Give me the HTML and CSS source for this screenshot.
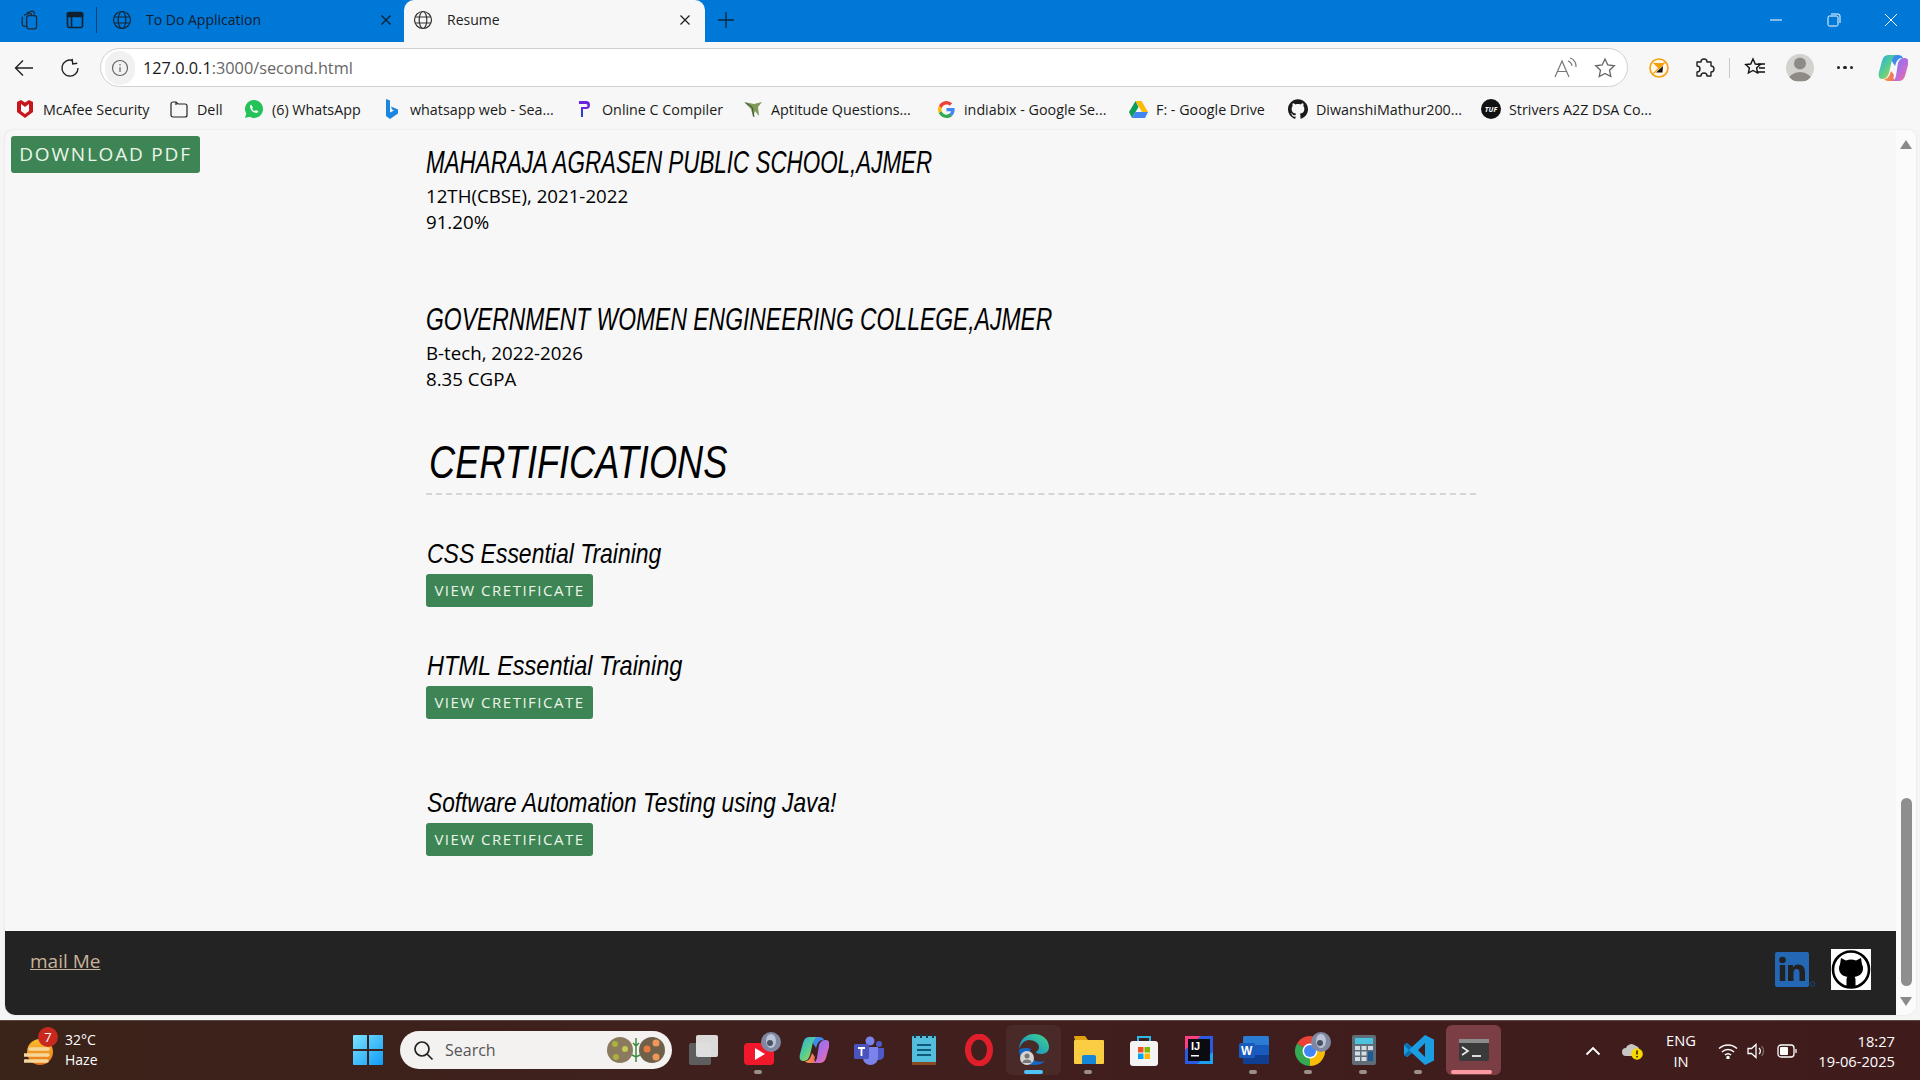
FILE: index.html
```html
<!DOCTYPE html>
<html lang="en">
<head>
<meta charset="utf-8">
<title>Resume</title>
<link rel="stylesheet" href="styles.css">
</head>
<body>
<div class="screen">
  <header class="tabstrip">
    <svg class="ic tool-a" width="22" height="22" viewBox="0 0 20 20" fill="none" stroke="#1d2b3a" stroke-width="1.200"><path d="M7 3.500l5-1.500a1.500 1.500 0 0 1 1.800 1V5"/><path d="M4.500 5.500l5-1.500a1.500 1.500 0 0 1 1.800 1V6"/><rect x="7" y="6" width="9" height="12" rx="2"/><path d="M7 16l-2.500-.5A1.500 1.500 0 0 1 3 14V7"/></svg>
    <svg class="ic tool-b" width="20" height="20" viewBox="0 0 20 20" fill="none" stroke="#10202f" stroke-width="1.600"><rect x="2.500" y="2.500" width="15" height="15" rx="2"/><path d="M2.500 3.500h15v3h-15z" fill="#10202f"/><path d="M6.500 6.500v11"/></svg>
    <span class="tab-sep"></span>
    <div class="tab">
      <svg class="ic" width="20" height="20" viewBox="0 0 20 20" fill="none" stroke="#10263a" stroke-width="1.200"><circle cx="10" cy="10" r="8.500"/><ellipse cx="10" cy="10" rx="3.800" ry="8.500"/><path d="M2 7h16M2 13h16"/></svg>
      <span class="tab-title">To Do Application</span>
      <svg class="tab-close" width="12" height="12" viewBox="0 0 12 12" stroke="#10202f" stroke-width="1.300"><path d="M1.500 1.500l9 9M10.500 1.500l-9 9"/></svg>
    </div>
    <div class="tab tab-active">
      <svg class="ic" width="20" height="20" viewBox="0 0 20 20" fill="none" stroke="#333" stroke-width="1.200"><circle cx="10" cy="10" r="8.500"/><ellipse cx="10" cy="10" rx="3.800" ry="8.500"/><path d="M2 7h16M2 13h16"/></svg>
      <span class="tab-title">Resume</span>
      <svg class="tab-close" width="12" height="12" viewBox="0 0 12 12" stroke="#222" stroke-width="1.300"><path d="M1.500 1.500l9 9M10.500 1.500l-9 9"/></svg>
    </div>
    <svg class="ic tab-new" width="18" height="18" viewBox="0 0 18 18" stroke="#10263a" stroke-width="1.300"><path d="M9 1v16M1 9h16"/></svg>
    <div class="win-controls">
      <svg width="14" height="14" viewBox="0 0 14 14" stroke="#fff" stroke-width="1"><path d="M1 7h12"/></svg>
      <svg width="14" height="14" viewBox="0 0 14 14" fill="none" stroke="#fff" stroke-width="1"><rect x="1" y="3" width="10" height="10" rx="1.500"/><path d="M4 1h7a2 2 0 0 1 2 2v7"/></svg>
      <svg width="14" height="14" viewBox="0 0 14 14" stroke="#fff" stroke-width="1"><path d="M1 1l12 12M13 1L1 13"/></svg>
    </div>
  </header>

  <div class="toolbar">
    <svg class="t-back" width="20" height="20" viewBox="0 0 20 20" fill="none" stroke="#222" stroke-width="1.400"><path d="M19 10H1.500M9 2.500L1.500 10 9 17.500"/></svg>
    <svg class="t-reload" width="20" height="20" viewBox="0 0 20 20" fill="none" stroke="#222" stroke-width="1.400"><path d="M12.500 2.500A8 8 0 1 0 18 10"/><path d="M12.500 1v5H17" transform="rotate(-8 12 4)"/></svg>
    <div class="addressbar">
      <span class="site-info"><svg width="18" height="18" viewBox="0 0 18 18" fill="none" stroke="#666" stroke-width="1.200"><circle cx="9" cy="9" r="7.500"/><path d="M9 8v5M9 5v1.500"/></svg></span>
      <span class="url"><span class="url-host">127.0.0.1</span>:3000/second.html</span>
      <svg class="read-aloud" width="24" height="22" viewBox="0 0 24 22" fill="none" stroke="#777" stroke-width="1.200"><path d="M1 20L8 4l7 16M3.500 14.500h9"/><path d="M14 4a6 6 0 0 1 4 5M16 1a9 9 0 0 1 6 9"/></svg>
      <svg class="addr-star" width="22" height="22" viewBox="0 0 22 22" fill="none" stroke="#666" stroke-width="1.300"><path d="M11 2l2.800 6 6.500.8-4.800 4.400 1.300 6.400L11 16.400l-5.800 3.200 1.300-6.400L1.700 8.800 8.200 8z"/></svg>
    </div>
    <svg class="t-mcafee" width="20" height="20" viewBox="0 0 20 20"><circle cx="10" cy="10" r="9" fill="#fff7ea" stroke="#f59e0b" stroke-width="1.600"/><path d="M4 5h12l-6 6z" fill="#f59e0b"/><path d="M15.500 4.500L4.500 15.500" stroke="#f59e0b" stroke-width="1.300"/><path d="M14 8l-.6 6.500H7z" fill="#111"/></svg>
    <svg class="t-puzzle" width="22" height="22" viewBox="0 0 22 22" fill="none" stroke="#222" stroke-width="1.400"><path d="M8 5a3 3 0 0 1 6 0h4v4a3 3 0 0 1 0 6v4h-4a3 3 0 0 0-6 0H4v-4a3 3 0 0 0 0-6V5z" stroke-linejoin="round"/></svg>
    <span class="tool-divider"></span>
    <svg class="t-fav" width="22" height="22" viewBox="0 0 22 22" fill="none" stroke="#111" stroke-width="1.400"><path d="M9 2l2.300 5 5 .6-3.700 3.400 1 5L9 13.500 4.400 16l1-5L1.700 7.600l5-.6z"/><path d="M14 7h7M15 11h6M14 15h7"/></svg>
    <span class="avatar"><svg width="28" height="28" viewBox="0 0 28 28" fill="#8e8b87"><circle cx="14" cy="9.500" r="6"/><path d="M2 27a12 9 0 0 1 24 0z"/></svg></span>
    <span class="more"><i></i><i></i><i></i></span>
    <svg class="t-copilot" width="30" height="28" viewBox="0 0 30 28"><defs><linearGradient id="cpa" x1="0" y1="0" x2="1" y2="1"><stop offset="0" stop-color="#2aa8f2"/><stop offset=".5" stop-color="#58d08a"/><stop offset="1" stop-color="#f6c343"/></linearGradient><linearGradient id="cpb" x1="0" y1="0" x2="1" y2="1"><stop offset="0" stop-color="#6a7cf0"/><stop offset=".55" stop-color="#b96ce0"/><stop offset="1" stop-color="#f8708c"/></linearGradient><linearGradient id="cpc" x1="0" y1="0" x2="1" y2="0"><stop offset="0" stop-color="#f0a040"/><stop offset="1" stop-color="#f05a6a"/></linearGradient></defs><path d="M10 1h10c3 0 4 1 5 3h-1c-3 0-5 2-6 5l-1 3z" fill="#3c8cf0"/><path d="M10 1h9c-3 0-4 2-5 5l-3 13c-1 3-3 6-6 6H4c-3 0-4-3-3-7L4 7c1-4 3-6 6-6z" fill="url(#cpa)"/><path d="M20 27H10c-2 0-3-1-4-2 3 0 5-2 6-5l1-3 3 4c-1 3-1 6 4 6z" fill="url(#cpc)"/><path d="M20 27h-7c3 0 4-2 5-5l2-13c1-3 3-5 6-5h1c3 0 4 3 3 7l-3 11c-1 3-3 5-7 5z" fill="url(#cpb)"/></svg>
  </div>

  <nav class="bookmarks">
    <a class="bm"><svg width="16" height="18" viewBox="0 0 16 18"><path d="M0 2l4-2 4 2.500L12 0l4 2v10l-8 6-8-6z" fill="#c8161d"/><path d="M4 4l4 3 4-3v7l-4 3-4-3z" fill="#fff"/></svg><span>McAfee Security</span></a>
    <a class="bm"><svg width="18" height="18" viewBox="0 0 18 18" fill="none" stroke="#222" stroke-width="1.200"><path d="M1 4a2 2 0 0 1 2-2h3l2 2h7a2 2 0 0 1 2 2v9a2 2 0 0 1-2 2H3a2 2 0 0 1-2-2z"/><path d="M6 2v3"/></svg><span>Dell</span></a>
    <a class="bm"><svg width="18" height="18" viewBox="0 0 18 18"><path d="M9 0a9 9 0 0 0-7.700 13.600L0 18l4.500-1.200A9 9 0 1 0 9 0z" fill="#25c25a"/><path d="M6 4.500L5 6c0 4 3.500 7 7 7l1.500-1.500-2.500-1.500-1 1C8.500 11 7.500 9.500 7 8.500l1-1z" fill="#fff"/></svg><span>(6) WhatsApp</span></a>
    <a class="bm"><svg width="14" height="20" viewBox="0 0 14 20"><path d="M1 0l4 1.500v12l4-2-2-1-1-3 7 3v4L5 20l-4-3z" fill="#1a86e0"/></svg><span>whatsapp web - Sea...</span></a>
    <a class="bm"><svg width="12" height="18" viewBox="0 0 12 18"><path d="M1 1h7a3.500 3.500 0 0 1 0 8H5v8H3V7h5a1.500 1.500 0 0 0 0-3H1z" fill="#6b22e0"/><path d="M3 10h2v7H3z" fill="#2a3bd0"/></svg><span>Online C Compiler</span></a>
    <a class="bm"><svg width="20" height="20" viewBox="0 0 20 20"><path d="M1 3l10 2 8-2-4 5 1 9-4-5-2 6-2-8z" fill="#7d9a56"/><path d="M3 4l6 4 2 10" stroke="#3c4f2a" fill="none"/></svg><span>Aptitude Questions...</span></a>
    <a class="bm"><svg width="17" height="17" viewBox="0 0 18 18"><path d="M17.600 9.200c0-.6-.1-1.200-.2-1.800H9v3.400h4.800a4.100 4.100 0 0 1-1.800 2.700v2.200h2.900c1.700-1.600 2.700-3.900 2.700-6.500z" fill="#4285f4"/><path d="M9 18c2.400 0 4.500-.8 5.900-2.200L12 13.600c-.8.500-1.800.9-3 .9-2.300 0-4.300-1.600-5-3.700H1v2.300A9 9 0 0 0 9 18z" fill="#34a853"/><path d="M4 10.700a5.400 5.400 0 0 1 0-3.400V5H1a9 9 0 0 0 0 8z" fill="#fbbc05"/><path d="M9 3.600c1.300 0 2.500.5 3.400 1.300L15 2.400A9 9 0 0 0 1 5l3 2.300c.7-2.100 2.700-3.700 5-3.700z" fill="#ea4335"/></svg><span>indiabix - Google Se...</span></a>
    <a class="bm"><svg width="19" height="17" viewBox="0 0 19 17"><path d="M6.500 0h6l6.500 11h-6z" fill="#fbbc04"/><path d="M6.500 0L0 11l3 6 6.500-11z" fill="#0f9d58"/><path d="M3 17h13l3-6H6.500z" fill="#4285f4"/></svg><span>F: - Google Drive</span></a>
    <a class="bm"><svg width="20" height="20" viewBox="0 0 24 24" fill="#1a1a1a"><path d="M12 .297c-6.630 0-12 5.373-12 12 0 5.303 3.438 9.800 8.205 11.385.6.113.82-.258.82-.577 0-.285-.01-1.040-.015-2.040-3.338.724-4.042-1.610-4.042-1.610C4.422 18.070 3.633 17.700 3.633 17.700c-1.087-.744.084-.729.084-.729 1.205.084 1.838 1.236 1.838 1.236 1.070 1.835 2.809 1.305 3.495.998.108-.776.417-1.305.76-1.605-2.665-.3-5.466-1.332-5.466-5.930 0-1.310.465-2.380 1.235-3.220-.135-.303-.54-1.523.105-3.176 0 0 1.005-.322 3.300 1.230.96-.267 1.980-.399 3-.405 1.020.006 2.040.138 3 .405 2.280-1.552 3.285-1.230 3.285-1.230.645 1.653.24 2.873.12 3.176.765.840 1.230 1.910 1.230 3.220 0 4.610-2.805 5.625-5.475 5.920.42.36.81 1.096.81 2.220 0 1.606-.015 2.896-.015 3.286 0 .315.21.69.825.57C20.565 22.092 24 17.592 24 12.297c0-6.627-5.373-12-12-12"/></svg><span>DiwanshiMathur200...</span></a>
    <a class="bm"><span class="tuf">TUF</span><span>Strivers A2Z DSA Co...</span></a>
  </nav>

  <div class="viewport">
    <div class="page">
      <main class="resume">
        <a class="btn btn-download">DOWNLOAD PDF</a>
        <section class="school first">
          <h3><span>MAHARAJA AGRASEN PUBLIC SCHOOL,AJMER</span></h3>
          <p>12TH(CBSE), 2021-2022</p>
          <p>91.20%</p>
        </section>
        <section class="school second">
          <h3><span>GOVERNMENT WOMEN ENGINEERING COLLEGE,AJMER</span></h3>
          <p>B-tech, 2022-2026</p>
          <p>8.35 CGPA</p>
        </section>
        <h2><span>CERTIFICATIONS</span></h2>
        <section class="cert cert-css">
          <h4><span>CSS Essential Training</span></h4>
          <a class="btn btn-cert">VIEW CRETIFICATE</a>
        </section>
        <section class="cert cert-html">
          <h4><span>HTML Essential Training</span></h4>
          <a class="btn btn-cert">VIEW CRETIFICATE</a>
        </section>
        <section class="cert cert-java">
          <h4><span>Software Automation Testing using Java!</span></h4>
          <a class="btn btn-cert">VIEW CRETIFICATE</a>
        </section>
      </main>
      <footer class="site-footer">
        <a class="mail">mail Me</a>
        <div class="socials">
          <svg class="linkedin" width="41" height="36" viewBox="0 0 41 36"><rect x="0" y="0" width="34" height="35" rx="2" fill="#2467b5"/><circle cx="7.500" cy="8" r="3.300" fill="#222"/><rect x="4.800" y="13" width="5.400" height="16" fill="#222"/><path d="M13 13h5v2.500c1-2 3-3 5-3 5 0 7 3 7 7.500v9h-5.500v-8c0-2.500-.8-4-2.700-4-2.200 0-3.300 1.500-3.300 4v8H13z" fill="#222"/><circle cx="37.500" cy="32" r="2.300" fill="none" stroke="#1d4480" stroke-width="1"/></svg>
          <span class="gh-box"><svg width="40" height="41" viewBox="0 0 40 41"><rect width="40" height="41" fill="#fff"/><circle cx="20" cy="20.500" r="18" fill="#fff" stroke="#000" stroke-width="2.600"/><path d="M10 9l5 2.500a14 14 0 0 1 10 0L30 9l1 6.500c2 3 1 9-3 11-2 1-3.500 1.200-4.500 1.200 .8 1 1 2 1 3.800V38h-9v-6.500c0-1.800.2-2.800 1-3.800-1 0-2.500-.2-4.500-1.200-4-2-5-8-3-11z" fill="#000"/></svg></span>
        </div>
      </footer>
    </div>
    <aside class="scrollbar">
      <span class="arrow-up"></span>
      <span class="thumb"></span>
      <span class="arrow-down"></span>
    </aside>
  </div>

  <div class="taskbar">
    <div class="weather">
      <span class="weather-icon">
        <svg width="30" height="32" viewBox="0 0 30 32"><defs><linearGradient id="sun" x1="0" y1="0" x2="0" y2="1"><stop offset="0" stop-color="#fbc02d"/><stop offset="1" stop-color="#e8701a"/></linearGradient></defs><circle cx="16" cy="18" r="13" fill="url(#sun)"/><path d="M6 15h18M0 21h24M1 27h22" stroke="#f5d79a" stroke-width="3.500" stroke-linecap="round"/></svg>
        <span class="weather-badge">7</span>
      </span>
      <div class="weather-text"><span>32°C</span><span>Haze</span></div>
    </div>
    <div class="task-center">
      <svg class="start" width="30" height="30" viewBox="0 0 30 30"><defs><linearGradient id="w" x1="0" y1="0" x2="1" y2="1"><stop offset="0" stop-color="#7ce4ff"/><stop offset="1" stop-color="#0f9bf5"/></linearGradient></defs><path d="M0 1a1 1 0 0 1 1-1h13v14H0zM16 0h13a1 1 0 0 1 1 1v13H16zM0 16h14v14H1a1 1 0 0 1-1-1zM16 16h14v13a1 1 0 0 1-1 1H16z" fill="url(#w)"/></svg>
      <div class="search">
        <svg width="21" height="21" viewBox="0 0 21 21" fill="none" stroke="#222" stroke-width="1.700"><circle cx="9" cy="9" r="7"/><path d="M14 14l5.500 5.500"/></svg>
        <span class="search-label">Search</span>
        <svg class="search-art" width="60" height="30" viewBox="0 0 60 30"><circle cx="14" cy="15" r="13" fill="#8b7a5e"/><circle cx="46" cy="15" r="13" fill="#6e6049"/><circle cx="9" cy="9" r="3" fill="#a8b23c"/><circle cx="19" cy="14" r="3" fill="#c6c95a"/><circle cx="10" cy="22" r="3" fill="#a8b23c"/><path d="M30 3v24M27 8l3 3 3-3M26 20l4 2 4-2" stroke="#3b8a3e" stroke-width="1.500" fill="none"/><circle cx="50" cy="8" r="3.500" fill="#f0965a"/><circle cx="41" cy="14" r="3.500" fill="#e9793f"/><circle cx="50" cy="22" r="3.500" fill="#f0965a"/></svg>
      </div>
      <div class="apps">
        <span class="app"><svg width="30" height="30" viewBox="0 0 30 30"><rect x="0" y="8" width="22" height="22" rx="2" fill="#5e5e5e"/><rect x="7" y="0" width="22" height="22" rx="2" fill="#e9e9e9" opacity=".92"/></svg></span>
        <span class="app"><svg class="has-avatar" width="38" height="36" viewBox="0 0 38 36"><rect x="0" y="11" width="30" height="22" rx="4" fill="#f2182c"/><path d="M11 16l10 6-10 6z" fill="#fff"/><circle cx="27" cy="10" r="10" fill="#7f88a0"/><ellipse cx="27" cy="9" rx="5" ry="7" fill="#bcc3d6"/><circle cx="26" cy="11" r="3" fill="#4a5266"/></svg><i class="dot"></i></span>
        <span class="app"><svg width="30" height="28" viewBox="0 0 30 28"><path d="M10 1h10c3 0 4 1 5 3h-1c-3 0-5 2-6 5l-1 3z" fill="#3c8cf0"/><path d="M10 1h9c-3 0-4 2-5 5l-3 13c-1 3-3 6-6 6H4c-3 0-4-3-3-7L4 7c1-4 3-6 6-6z" fill="url(#cpa)"/><path d="M20 27H10c-2 0-3-1-4-2 3 0 5-2 6-5l1-3 3 4c-1 3-1 6 4 6z" fill="url(#cpc)"/><path d="M20 27h-7c3 0 4-2 5-5l2-13c1-3 3-5 6-5h1c3 0 4 3 3 7l-3 11c-1 3-3 5-7 5z" fill="url(#cpb)"/></svg></span>
        <span class="app"><svg width="30" height="30" viewBox="0 0 30 30"><circle cx="25" cy="9" r="3" fill="#5059c9"/><circle cx="16" cy="6" r="4.500" fill="#7b83eb"/><path d="M21 13h9v8a5 5 0 0 1-8 3z" fill="#5059c9"/><path d="M9 12h15v11a7.500 7 0 0 1-15 0z" fill="#7b83eb"/><rect x="0" y="9" width="15" height="15" rx="1.500" fill="#4b53bc"/><path d="M4 13h7M7.500 13v8" stroke="#fff" stroke-width="1.800"/></svg></span>
        <span class="app"><svg width="24" height="32" viewBox="0 0 24 32"><rect y="2" width="24" height="28" rx="1" fill="#52bedc"/><rect y="28" width="24" height="3" fill="#8a4a20"/><path d="M3 0v4M9 0v4M15 0v4M21 0v4" stroke="#163a4a" stroke-width="2"/><path d="M5 11h14M5 16h14M5 21h14" stroke="#125a7a" stroke-width="2.200"/></svg></span>
        <span class="app"><svg width="30" height="32" viewBox="0 0 30 32"><ellipse cx="15" cy="16" rx="11" ry="13.500" fill="none" stroke="#e01f2a" stroke-width="6"/></svg></span>
        <span class="app app-active"><svg width="32" height="34" viewBox="0 0 32 34"><defs><linearGradient id="edg" x1="0" y1="1" x2="1" y2="0"><stop offset="0" stop-color="#0f7fd8"/><stop offset="1" stop-color="#42d68a"/></linearGradient></defs><path d="M1 17C1 7 8 1 16 1c9 0 15 6 15 13 0 5-4 7-8 7-3 0-5-1-5-2 2-1 3-3 3-5 0-4-5-7-10-7C7 7 2 11 1 17z" fill="url(#edg)"/><path d="M1 17c0 9 7 15 15 15 4 0 8-1 11-4-4 1-8 1-11-1-4-3-5-8-3-11-5-2-10-1-12 1z" fill="#1467c4"/><circle cx="9" cy="25" r="7" fill="#d6d4d0"/><circle cx="9" cy="23" r="2.500" fill="#777"/><path d="M4.500 30a4.500 3.500 0 0 1 9 0z" fill="#777"/></svg><i class="bar-blue"></i></span>
        <span class="app"><svg width="32" height="30" viewBox="0 0 32 30"><path d="M1 2a1 1 0 0 1 1-1h10l3 4H2z" fill="#e0a010"/><rect x="1" y="5" width="30" height="24" rx="1" fill="#fbcd42"/><path d="M9 22a2 2 0 0 1 2-2h10a2 2 0 0 1 2 2v7H9z" fill="#1587d8"/></svg><i class="dot"></i></span>
        <span class="app"><svg width="30" height="32" viewBox="0 0 30 32"><path d="M9 7V3h12v4" fill="none" stroke="#2ab8e8" stroke-width="2"/><rect x="1" y="7" width="28" height="25" rx="3" fill="#f4f4f4"/><rect x="9" y="13" width="5.500" height="5.500" fill="#f25022"/><rect x="15.500" y="13" width="5.500" height="5.500" fill="#7fba00"/><rect x="9" y="19.500" width="5.500" height="5.500" fill="#00a4ef"/><rect x="15.500" y="19.500" width="5.500" height="5.500" fill="#ffb900"/></svg></span>
        <span class="app"><svg width="28" height="28" viewBox="0 0 28 28"><rect width="28" height="28" fill="#2a5ae0"/><path d="M0 0h16L0 14z" fill="#fc3f7e"/><path d="M28 28H12l16-12z" fill="#1ea0f0"/><rect x="3" y="3" width="22" height="22" fill="#0b0b12"/><text class="ij" x="6" y="14">IJ</text><rect x="6" y="19" width="8" height="1.500" fill="#fff"/></svg></span>
        <span class="app"><svg width="30" height="30" viewBox="0 0 30 30"><rect x="4" y="1" width="26" height="28" rx="1.500" fill="#2b7cd3"/><rect x="4" y="10" width="26" height="10" fill="#185abd"/><rect x="4" y="20" width="26" height="9" fill="#103f91"/><rect x="0" y="8" width="16" height="15" rx="1.500" fill="#185abd"/><text class="wd" x="2" y="20">W</text></svg><i class="dot"></i></span>
        <span class="app"><svg class="has-avatar" width="38" height="36" viewBox="0 0 38 36"><path d="M16 19L3 11.500A15 15 0 0 1 29 11.500z" fill="#ea4335"/><path d="M16 19L29 11.500A15 15 0 0 1 16 34z" fill="#fbbc05"/><path d="M16 19L16 34A15 15 0 0 1 3 11.500z" fill="#34a853"/><circle cx="16" cy="19" r="7.500" fill="#fff"/><circle cx="16" cy="19" r="6" fill="#4285f4"/><circle cx="27" cy="10" r="10" fill="#7f88a0"/><ellipse cx="27" cy="9" rx="5" ry="7" fill="#bcc3d6"/><circle cx="26" cy="11" r="3" fill="#4a5266"/></svg><i class="dot"></i></span>
        <span class="app"><svg width="24" height="30" viewBox="0 0 24 30"><rect width="24" height="30" rx="2" fill="#5f6d78"/><rect x="3" y="3" width="18" height="6" fill="#4cc3dd"/><path d="M3 11h5v4H3zM9.500 11h5v4h-5zM16 11h5v4h-5zM3 16.500h5v4H3zM9.500 16.500h5v4h-5zM3 22h5v4H3zM9.500 22h5v4h-5z" fill="#d6dde2"/><rect x="16" y="16.500" width="5" height="9.500" fill="#1d5a9a"/></svg><i class="dot"></i></span>
        <span class="app"><svg width="30" height="30" viewBox="0 0 30 30"><path d="M21 0l9 4.500v21L21 30 8 18l-5 4-3-2v-10l3-2 5 4zM21 8l-7 7 7 7z" fill="#1b9de2" fill-rule="evenodd"/><path d="M0 10l3-2 5 4-3 3zM0 20l3 2 5-4-3-3z" fill="#0e6fb0"/></svg><i class="dot"></i></span>
        <span class="app app-term"><svg width="30" height="22" viewBox="0 0 30 22"><rect width="30" height="22" rx="2" fill="#3a3a3a"/><rect width="30" height="4" fill="#8c8c8c"/><path d="M3 8l6 4-6 4" fill="none" stroke="#eee" stroke-width="1.600"/><path d="M13 17h9" stroke="#eee" stroke-width="1.800"/></svg><i class="bar-pink"></i></span>
      </div>
    </div>
    <div class="tray">
      <svg class="tray-up" width="16" height="10" viewBox="0 0 16 10" fill="none" stroke="#fff" stroke-width="1.800"><path d="M1.500 8.500L8 2l6.500 6.500"/></svg>
      <svg class="tray-cloud" width="22" height="18" viewBox="0 0 22 18"><path d="M4 14a4 4 0 0 1 0-8 6 6 0 0 1 10-2 4 4 0 0 1 3 4v6z" fill="#c9c5c2"/><circle cx="15" cy="12" r="5.800" fill="#f7d900"/><path d="M15 8.500v4M15 14v1.500" stroke="#111" stroke-width="1.400"/></svg>
      <div class="lang"><span>ENG</span><span>IN</span></div>
      <svg class="tray-wifi" width="20" height="16" viewBox="0 0 20 16" fill="none" stroke="#fff" stroke-width="1.500"><path d="M1 5.500a13 13 0 0 1 18 0M4 9a8.500 8.500 0 0 1 12 0M7 12a4 4 0 0 1 6 0"/><circle cx="10" cy="14.500" r="1" fill="#fff"/></svg>
      <svg class="tray-vol" width="20" height="16" viewBox="0 0 20 16" fill="none" stroke="#fff" stroke-width="1.300"><path d="M1 5.500h3.500L9 1.500v13l-4.500-4H1z"/><path d="M12 5a4 4 0 0 1 0 6"/><path d="M14.500 3a7 7 0 0 1 0 10" stroke="#7a6a68"/></svg>
      <svg class="tray-bat" width="20" height="14" viewBox="0 0 20 14" fill="none" stroke="#fff" stroke-width="1.300"><rect x="1" y="1" width="16" height="12" rx="3"/><rect x="3" y="3" width="8" height="8" rx="1" fill="#fff" stroke="none"/><path d="M19 5v4"/></svg>
      <div class="clock"><span>18:27</span><span>19-06-2025</span></div>
    </div>
  </div>
</div>
</body>
</html>
```
FILE: styles.css
```css
* { box-sizing: border-box; }
html, body { margin: 0; padding: 0; height: 100%; overflow: hidden; }
body { font-family: "Open Sans", "Noto Sans", sans-serif; }
.screen { width: 1920px; height: 1080px; display: flex; flex-direction: column; background: #f5f5f5; }
svg { display: block; flex: none; }

/* tab strip */
.tabstrip { height: 42px; background: #0078d7; display: flex; align-items: center; padding: 0 0 2px 19px; flex: none; color: #10202f; }
.tool-a { margin-right: 24px; }
.tool-b { margin-right: 11px; }
.tab-sep { width: 1px; height: 26px; background: #10406a; margin-right: 7px; }
.tab { width: 300px; height: 42px; margin-bottom: -2px; display: flex; align-items: center; padding: 0 12px 3px 8px; font-size: 14px; }
.tab-title { margin-left: 14px; flex: 1; }
.tab-active { width: 301px; background: #f7f7f7; border-radius: 10px 10px 0 0; padding: 0 14px 3px 9px; color: #222; }
.tab-new { margin-left: 12px; }
.win-controls { margin-left: auto; padding-right: 22px; display: flex; gap: 43.500px; align-items: center; }

/* toolbar */
.toolbar { height: 46px; flex: none; background: #f7f7f7; padding-top: 5px; display: grid; grid-template-columns: 14px 20px 26px 20px 20px 1528px 21px 20px 24px 22px 14px 1px 14px 22px 20px 28px 21px 20px 23px 30px; align-items: center; }
.t-back { grid-column: 2; }
.t-reload { grid-column: 4; }
.addressbar { grid-column: 6; height: 39px; background: #fff; border: 1px solid #d0d0d0; border-radius: 20px; display: flex; align-items: center; padding-left: 4px; }
.site-info { width: 30px; height: 34px; background: #f1f1f1; border-radius: 15px; display: flex; align-items: center; justify-content: center; margin-right: 8px; }
.url { font-size: 16.300px; color: #666; flex: 1; }
.url-host { color: #1a1a1a; }
.read-aloud { margin-right: 16px; }
.addr-star { margin-right: 11px; }
.t-mcafee { grid-column: 8; }
.t-puzzle { grid-column: 10; }
.tool-divider { grid-column: 12; height: 20px; background: #c8c8c8; }
.t-fav { grid-column: 14; }
.avatar { grid-column: 16; width: 28px; height: 28px; border-radius: 50%; background: #d4d2ce; overflow: hidden; }
.more { grid-column: 18; display: flex; gap: 3px; justify-content: center; }
.more i { width: 3.500px; height: 3.500px; border-radius: 50%; background: #222; flex: none; }
.t-copilot { grid-column: 20; }

/* bookmarks */
.bookmarks { height: 42px; flex: none; background: #f7f7f7; display: grid; grid-template-columns: 154px 75px 138px 192px 169px 193px 192px 160px 193px 300px; padding-left: 15px; align-items: center; font-size: 14.300px; color: #1a1a1a; }
.bm { display: grid; grid-template-columns: 20px auto; column-gap: 8px; align-items: center; white-space: nowrap; }
.bm svg { justify-self: center; }
.tuf { width: 20px; height: 20px; border-radius: 50%; background: #111; color: #fff; font-size: 7px; font-weight: 700; font-style: italic; display: flex; align-items: center; justify-content: center; }

/* viewport */
.viewport { flex: 1; min-height: 0; margin: 0 4px 5px 5px; display: flex; background: #f7f7f7; border-radius: 8px 8px 10px 10px; box-shadow: 0 0 2px #d8d8d8; overflow: hidden; }
.page { flex: 1; min-width: 0; display: flex; flex-direction: column; }
.resume { position: relative; flex: 1; padding: 15px 0 0 421px; color: #000; }
.btn { display: flex; align-items: center; justify-content: center; background: #3e8556; color: #ecf5e8; border-radius: 3px; }
.btn-download { position: absolute; left: 6px; top: 6px; height: 37px; width: 189px; font-size: 19px; letter-spacing: 1.800px; padding-bottom: 2px; }
h2, h3, h4 { margin: 0; font-family: "Liberation Sans", sans-serif; font-style: italic; font-weight: 400; white-space: nowrap; }
h2 span, h3 span, h4 span { display: inline-block; transform-origin: left center; }
h3 { font-size: 32px; line-height: 34px; margin-bottom: 4px; }
.first h3 span { transform: scaleX(.70); }
.second h3 span { transform: scaleX(.716); }
.school p { margin: 0; font-size: 18.700px; line-height: 26px; }
.school.second { margin-top: 67px; }
h2 { font-size: 46px; line-height: 60px; margin-top: 40px; width: 1050px; padding-left: 3px; border-bottom: 2px dashed #d5d5d5; height: 63px; }
h2 span { transform: scaleX(.787); }
h4 { font-size: 28px; line-height: 36px; padding-left: 1px; margin-bottom: 2px; }
.cert-css h4 span { transform: scaleX(.82); }
.cert-html h4 span { transform: scaleX(.84); }
.cert-java h4 span { transform: scaleX(.81); }
.cert-css { margin-top: 41px; }
.cert-html { margin-top: 41px; }
.cert-java { margin-top: 66px; }
.btn-cert { width: 167px; height: 33px; font-size: 15px; letter-spacing: 1.500px; padding-bottom: 2px; }

/* footer */
.site-footer { height: 84px; background: #232323; display: flex; justify-content: space-between; padding: 17px 25px 0 25px; flex: none; }
.mail { font-size: 19px; line-height: 26px; color: #c7b299; text-decoration: underline; }
.socials { display: flex; gap: 15px; align-items: flex-start; margin-top: 1px; }
.linkedin { margin-top: 3px; }

/* scrollbar */
.scrollbar { width: 20px; flex: none; background: #fbfbfb; display: flex; flex-direction: column; align-items: center; padding: 10px 0 9px 0; }
.arrow-up { width: 0; height: 0; border-left: 6px solid transparent; border-right: 6px solid transparent; border-bottom: 9px solid #8a8a8a; }
.thumb { width: 11px; height: 188px; background: #8e8e8e; border-radius: 6px; margin-top: auto; }
.arrow-down { width: 0; height: 0; border-left: 6px solid transparent; border-right: 6px solid transparent; border-top: 9px solid #8a8a8a; margin-top: 11px; }

/* taskbar */
.taskbar { height: 60px; flex: none; background: linear-gradient(90deg, #3a2319, #40201e 40%, #401b1c); border-top: 1px solid #5a4a44; display: flex; align-items: center; color: #fff; }
.weather { display: flex; align-items: center; width: 353px; padding-left: 24px; }
.weather-icon { position: relative; width: 41px; height: 34px; }
.weather-badge { position: absolute; left: 14px; top: -7px; width: 20px; height: 20px; border-radius: 50%; background: #c8281e; font-size: 13px; display: flex; align-items: center; justify-content: center; }
.weather-text { display: flex; flex-direction: column; font-size: 14px; line-height: 20px; padding-bottom: 1px; }
.task-center { display: flex; align-items: center; padding-bottom: 1px; }
.start { margin-right: 17px; }
.search { width: 272px; height: 38px; border-radius: 19px; background: #f3f2f1; display: flex; align-items: center; padding: 0 6px 0 13px; color: #555; }
.search-label { margin-left: 11px; font-size: 16px; flex: 1; }
.apps { display: grid; grid-template-columns: repeat(15, 55px); margin-left: 4px; }
.app { position: relative; height: 50px; display: flex; align-items: center; justify-content: center; }
.has-avatar { margin-left: 8px; }
.dot { position: absolute; bottom: 1px; left: 23px; width: 8px; height: 4px; border-radius: 2px; background: #9b8f8b; }
.bar-blue { position: absolute; bottom: 1px; left: 18px; width: 19px; height: 4px; border-radius: 2px; background: #4fc3f7; }
.bar-pink { position: absolute; bottom: 1px; left: 5px; width: 41px; height: 4px; border-radius: 2px; background: #ff9aa2; }
.app-active { background: rgba(255,255,255,.05); border-radius: 6px; }
.app-term { background: #7a3e44; border-radius: 6px; }
.ij { font: 700 11px "Liberation Sans", sans-serif; fill: #fff; }
.wd { font: 700 12px "Liberation Sans", sans-serif; fill: #fff; }
.tray { margin-left: auto; width: 335px; display: flex; align-items: center; padding-right: 25px; }
.tray-cloud { margin-left: 21px; }
.lang { width: 30px; display: flex; flex-direction: column; align-items: center; font-size: 14.700px; line-height: 21px; margin-left: 22px; }
.tray-wifi { margin-left: 22px; }
.tray-vol { margin-left: 9px; }
.tray-bat { margin-left: 10px; }
.clock { margin-left: auto; display: flex; flex-direction: column; align-items: flex-end; font-size: 14.700px; line-height: 20px; }
```
